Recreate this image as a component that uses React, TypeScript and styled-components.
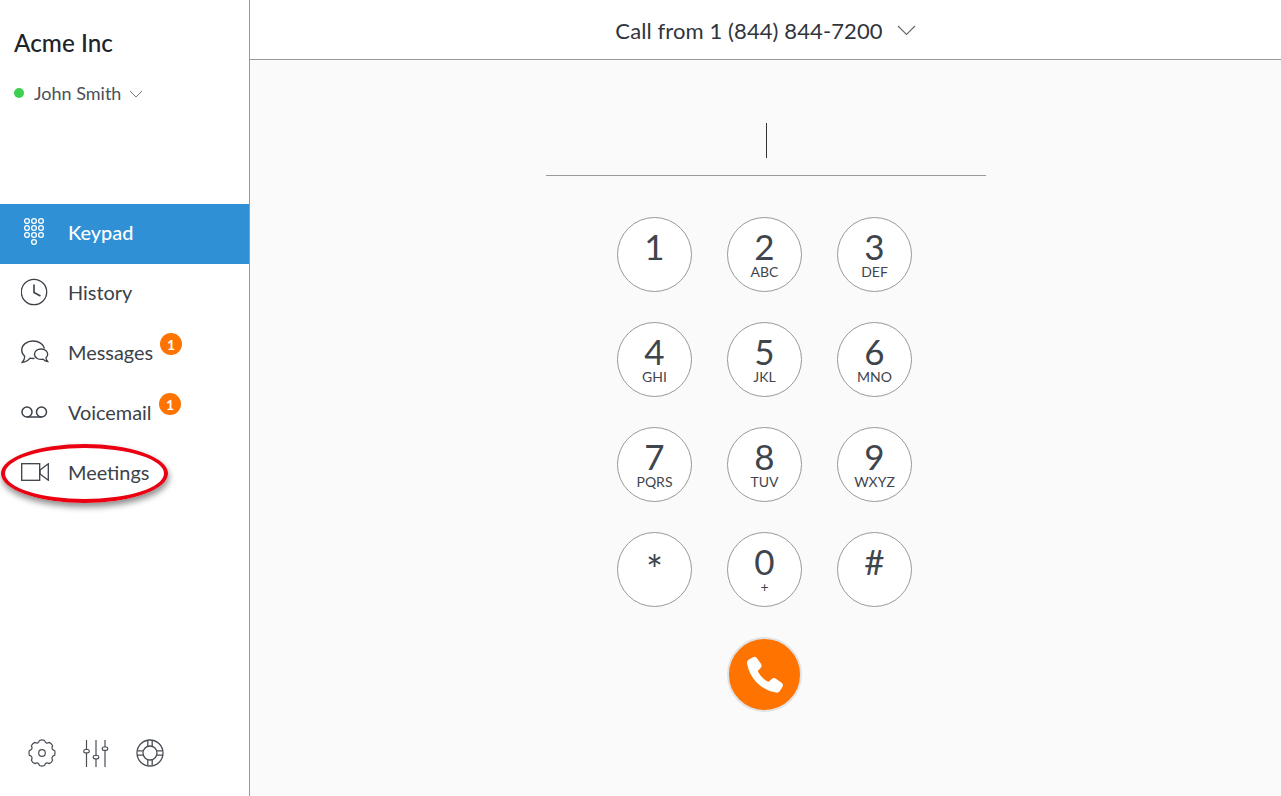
import React from 'react';
import styled, { createGlobalStyle } from 'styled-components';

const GlobalStyle = createGlobalStyle`
  html, body {
    margin: 0;
    padding: 0;
    height: 100%;
    background: #fff;
  }
  body {
    font-family: Lato, "Open Sans", sans-serif;
    color: #333a42;
    overflow: hidden;
  }
`;

const Page = styled.div`
  display: flex;
  width: 1281px;
  height: 796px;
`;

const Sidebar = styled.aside`
  position: relative;
  flex: 0 0 250px;
  box-sizing: border-box;
  display: flex;
  flex-direction: column;
  border-right: 1px solid #999;
  background: #fff;
`;

const Brand = styled.div`
  height: 204px;
  box-sizing: border-box;
  padding: 28px 0 0 14px;
`;

const Company = styled.div`
  font-size: 24.3px;
  line-height: 29px;
  font-weight: 500;
  color: #20242a;
`;

const UserRow = styled.div`
  display: flex;
  align-items: center;
  margin-top: 24px;
  font-size: 18px;
  line-height: 24px;
  color: #4a5058;
`;

const StatusDot = styled.span`
  width: 10px;
  height: 10px;
  border-radius: 50%;
  background: #3bd04f;
  margin-right: 10px;
`;

const SmallChevron = styled.svg`
  margin-left: 8px;
  margin-top: 1px;
`;

const Nav = styled.nav`
  display: flex;
  flex-direction: column;
`;

const NavItem = styled.div<{ $active?: boolean }>`
  position: relative;
  height: 60px;
  box-sizing: border-box;
  display: flex;
  align-items: center;
  padding: 0 0 4px 20px;
  font-size: 19.9px;
  background: ${(p) => (p.$active ? '#2f90d6' : 'transparent')};
  color: ${(p) => (p.$active ? '#fff' : '#3b4149')};
  font-weight: ${(p) => (p.$active ? 500 : 400)};
`;

const NavIcon = styled.span`
  width: 30px;
  height: 30px;
  margin-right: 18px;
  display: flex;
  align-items: center;
  justify-content: center;
`;

const Badge = styled.span<{ $left: number }>`
  position: absolute;
  left: ${(p) => p.$left}px;
  top: 9px;
  width: 22px;
  height: 22px;
  border-radius: 50%;
  background: #ff7300;
  color: #fff;
  font-size: 14px;
  font-weight: 700;
  display: flex;
  align-items: center;
  justify-content: center;
`;

const Highlight = styled.div`
  position: absolute;
  left: 1px;
  top: 444px;
  width: 167px;
  height: 59px;
  box-sizing: border-box;
  border: 4px solid #ea0011;
  border-radius: 50%;
  box-shadow: 1px 4px 6px rgba(0, 0, 0, 0.45);
  pointer-events: none;
`;

const Tools = styled.div`
  margin-top: auto;
  display: flex;
  align-items: center;
  gap: 27px;
  padding: 0 0 29px 28px;
`;

const Main = styled.main`
  flex: 1;
  display: flex;
  flex-direction: column;
  min-width: 0;
  background: #fafafa;
`;

const TopBar = styled.header`
  height: 60px;
  box-sizing: border-box;
  display: flex;
  align-items: center;
  justify-content: center;
  padding-top: 2px;
  background: #fff;
  border-bottom: 1px solid #999;
  font-size: 22px;
  letter-spacing: 0.1px;
  color: #30353c;
`;

const TopChevron = styled.svg`
  margin-left: 14px;
  margin-top: -1px;
`;

const Dialer = styled.section`
  display: flex;
  flex-direction: column;
  align-items: center;
`;

const NumberField = styled.div`
  width: 440px;
  height: 116px;
  box-sizing: border-box;
  border-bottom: 1px solid #999;
  display: flex;
  justify-content: center;
  padding: 63px 0 0 2px;
`;

const Caret = styled.span`
  width: 1px;
  height: 35px;
  background: #333;
`;

const KeyGrid = styled.div`
  display: grid;
  grid-template-columns: repeat(3, 75px);
  grid-auto-rows: 75px;
  column-gap: 35px;
  row-gap: 30px;
  margin: 41px 2px 0 0;
`;

const Key = styled.div`
  box-sizing: border-box;
  width: 75px;
  height: 75px;
  border: 1px solid #999;
  border-radius: 50%;
  background: #fff;
  display: flex;
  flex-direction: column;
  align-items: center;
  padding-top: 13px;
`;

const Digit = styled.span<{ $star?: boolean }>`
  font-size: ${(p) => (p.$star ? 40 : 35)}px;
  line-height: 30px;
  font-weight: 400;
  color: #3f454d;
  margin-top: ${(p) => (p.$star ? 9 : 0)}px;
`;

const Letters = styled.span`
  font-size: 14px;
  line-height: 14px;
  margin-top: 4px;
  color: #3f454d;
`;

const CallButton = styled.div`
  grid-column: 2;
  box-sizing: border-box;
  width: 75px;
  height: 75px;
  border: 2px solid #e2e2e2;
  border-radius: 50%;
  background: #ff7300;
  display: flex;
  align-items: center;
  justify-content: center;
`;

const keys = [
  ['1', ''],
  ['2', 'ABC'],
  ['3', 'DEF'],
  ['4', 'GHI'],
  ['5', 'JKL'],
  ['6', 'MNO'],
  ['7', 'PQRS'],
  ['8', 'TUV'],
  ['9', 'WXYZ'],
  ['*', ''],
  ['0', '+'],
  ['#', ''],
];

const line = { fill: 'none', stroke: '#3b4149', strokeWidth: 1.3 };

const KeypadIcon = () => (
  <svg width="24" height="30" viewBox="0 0 24 30" fill="none" stroke="#fff" strokeWidth="1.3">
    {[4, 11, 18].map((y) =>
      [4, 11, 18].map((x) => <circle key={`${x}-${y}`} cx={x} cy={y} r="2.4" />)
    )}
    <circle cx="11" cy="25" r="2.4" />
  </svg>
);

const ClockIcon = () => (
  <svg width="28" height="28" viewBox="0 0 28 28">
    <circle cx="13" cy="14" r="12.7" {...line} />
    <path d="M13 6.5V14.5L19.5 18" {...line} strokeWidth={1.6} />
  </svg>
);

const MessagesIcon = () => (
  <svg width="28" height="24" viewBox="0 0 28 24">
    <path
      d="M13.5 18.4C12 18.6 10.5 18.5 9 18.2C7.2 20.6 4.6 22 1.2 22.4C2.8 20.6 3.8 18.6 3.7 16.2C1.6 14.4 .7 12.2 .7 10C.7 5 5.8 1 12 1C17.8 1 22.6 4.2 23.4 8.6"
      {...line}
    />
    <path
      d="M20 9C23.8 9 26.7 11.3 26.7 14.2C26.7 15.7 26 16.8 25 17.7C25 19.2 25.8 20.6 26.8 21.6C24.8 21.6 23 20.5 22 19.2C18 20.2 13.5 18 13.5 14.2C13.5 11.3 16.2 9 20 9Z"
      {...line}
    />
  </svg>
);

const VoicemailIcon = () => (
  <svg width="28" height="14" viewBox="0 0 28 14">
    <circle cx="6" cy="7" r="5" {...line} strokeWidth={1.5} />
    <circle cx="20.5" cy="7" r="5" {...line} strokeWidth={1.5} />
    <path d="M6 12H20.5" {...line} strokeWidth={1.5} />
  </svg>
);

const VideoIcon = () => (
  <svg width="28" height="18" viewBox="0 0 28 18">
    <rect x=".7" y=".7" width="18" height="16.6" {...line} />
    <path d="M27.3 .8V17.2L19 11V7Z" {...line} />
  </svg>
);

const GearIcon = () => {
  const teeth = Array.from({ length: 8 }, (_, i) => i * 45);
  const r = (deg: number, rad: number) => {
    const a = (deg * Math.PI) / 180;
    return `${(14 + rad * Math.sin(a)).toFixed(2)} ${(14 - rad * Math.cos(a)).toFixed(2)}`;
  };
  const d = teeth
    .map((t) => `${t === 0 ? 'M' : 'L'}${r(t - 11, 12.8)} Q${r(t, 13.5)} ${r(t + 11, 12.8)} Q${r(t + 22.5, 9.4)} ${r(t + 34, 12.8)}`)
    .join(' ');
  return (
    <svg width="28" height="28" viewBox="0 0 28 28">
      <path d={`${d}Z`} fill="none" stroke="#4a4f55" strokeWidth="1.2" />
      <circle cx="14" cy="14" r="3.3" fill="none" stroke="#4a4f55" strokeWidth="1.2" />
    </svg>
  );
};

const SlidersIcon = () => (
  <svg width="26" height="28" viewBox="0 0 26 28" fill="none" stroke="#4a4f55" strokeWidth="1.2">
    <path d="M3.5 1V10.5M3.5 14V28M13 1V16.5M13 20V28M22 1V8M22 11.5V28" />
    <rect x=".7" y="10.5" width="5.6" height="3.4" rx="1.7" />
    <rect x="10.2" y="16.5" width="5.6" height="3.4" rx="1.7" />
    <rect x="19.2" y="8" width="5.6" height="3.4" rx="1.7" />
  </svg>
);

const HelpIcon = () => (
  <svg width="28" height="28" viewBox="0 0 28 28" fill="none" stroke="#4a4f55" strokeWidth="1.3">
    <circle cx="14" cy="14" r="13" />
    <circle cx="14" cy="14" r="7" />
    <path d="M11.8 1.2V7.4M16.2 1.2V7.4M11.8 20.6V26.8M16.2 20.6V26.8M1.2 11.8H7.4M1.2 16.2H7.4M20.6 11.8H26.8M20.6 16.2H26.8" />
  </svg>
);

const PhoneIcon = () => (
  <svg width="42" height="42" viewBox="0 -1.5 36 36">
    <path
      fill="#fff"
      stroke="#fff"
      strokeWidth="1.2"
      strokeLinejoin="round"
      d="M3.2 6.6C3 5.6 3.4 4.6 4.3 4L7.6 1.9C8.7 1.2 10.1 1.5 10.8 2.6L14 7.2C14.6 8.1 14.5 9.2 13.8 10L11.8 12.2C11.3 12.8 11.2 13.5 11.6 14.2C13.5 17.6 16.6 20.7 20 22.6C20.7 23 21.4 22.9 22 22.4L24.2 20.4C25 19.7 26.1 19.6 27 20.2L31.6 23.4C32.7 24.1 33 25.5 32.3 26.6L30.2 29.9C29.6 30.8 28.6 31.2 27.6 31C14.9 28.7 5.5 19.3 3.2 6.6Z"
    />
  </svg>
);

const App = () => {
  return (
    <Page>
      <GlobalStyle />
      <Sidebar>
        <Brand>
          <Company>Acme Inc</Company>
          <UserRow>
            <StatusDot />
            John Smith
            <SmallChevron width="14" height="8" viewBox="0 0 14 8">
              <path d="M1 1L7 7L13 1" fill="none" stroke="#777" strokeWidth="1" />
            </SmallChevron>
          </UserRow>
        </Brand>
        <Nav>
          <NavItem $active>
            <NavIcon><KeypadIcon /></NavIcon>
            Keypad
          </NavItem>
          <NavItem>
            <NavIcon><ClockIcon /></NavIcon>
            History
          </NavItem>
          <NavItem>
            <NavIcon><MessagesIcon /></NavIcon>
            Messages
            <Badge $left={160}>1</Badge>
          </NavItem>
          <NavItem>
            <NavIcon><VoicemailIcon /></NavIcon>
            Voicemail
            <Badge $left={159}>1</Badge>
          </NavItem>
          <NavItem>
            <NavIcon><VideoIcon /></NavIcon>
            Meetings
          </NavItem>
        </Nav>
        <Highlight />
        <Tools>
          <GearIcon />
          <SlidersIcon />
          <HelpIcon />
        </Tools>
      </Sidebar>
      <Main>
        <TopBar>
          Call from 1 (844) 844-7200
          <TopChevron width="19" height="11" viewBox="0 0 19 11">
            <path d="M1 1L9.5 9.5L18 1" fill="none" stroke="#666" strokeWidth="1.1" />
          </TopChevron>
        </TopBar>
        <Dialer>
          <NumberField>
            <Caret />
          </NumberField>
          <KeyGrid>
            {keys.map(([digit, letters]) => (
              <Key key={digit}>
                <Digit $star={digit === '*'}>{digit}</Digit>
                {letters && <Letters>{letters}</Letters>}
              </Key>
            ))}
            <CallButton>
              <PhoneIcon />
            </CallButton>
          </KeyGrid>
        </Dialer>
      </Main>
    </Page>
  );
};

export default App;
